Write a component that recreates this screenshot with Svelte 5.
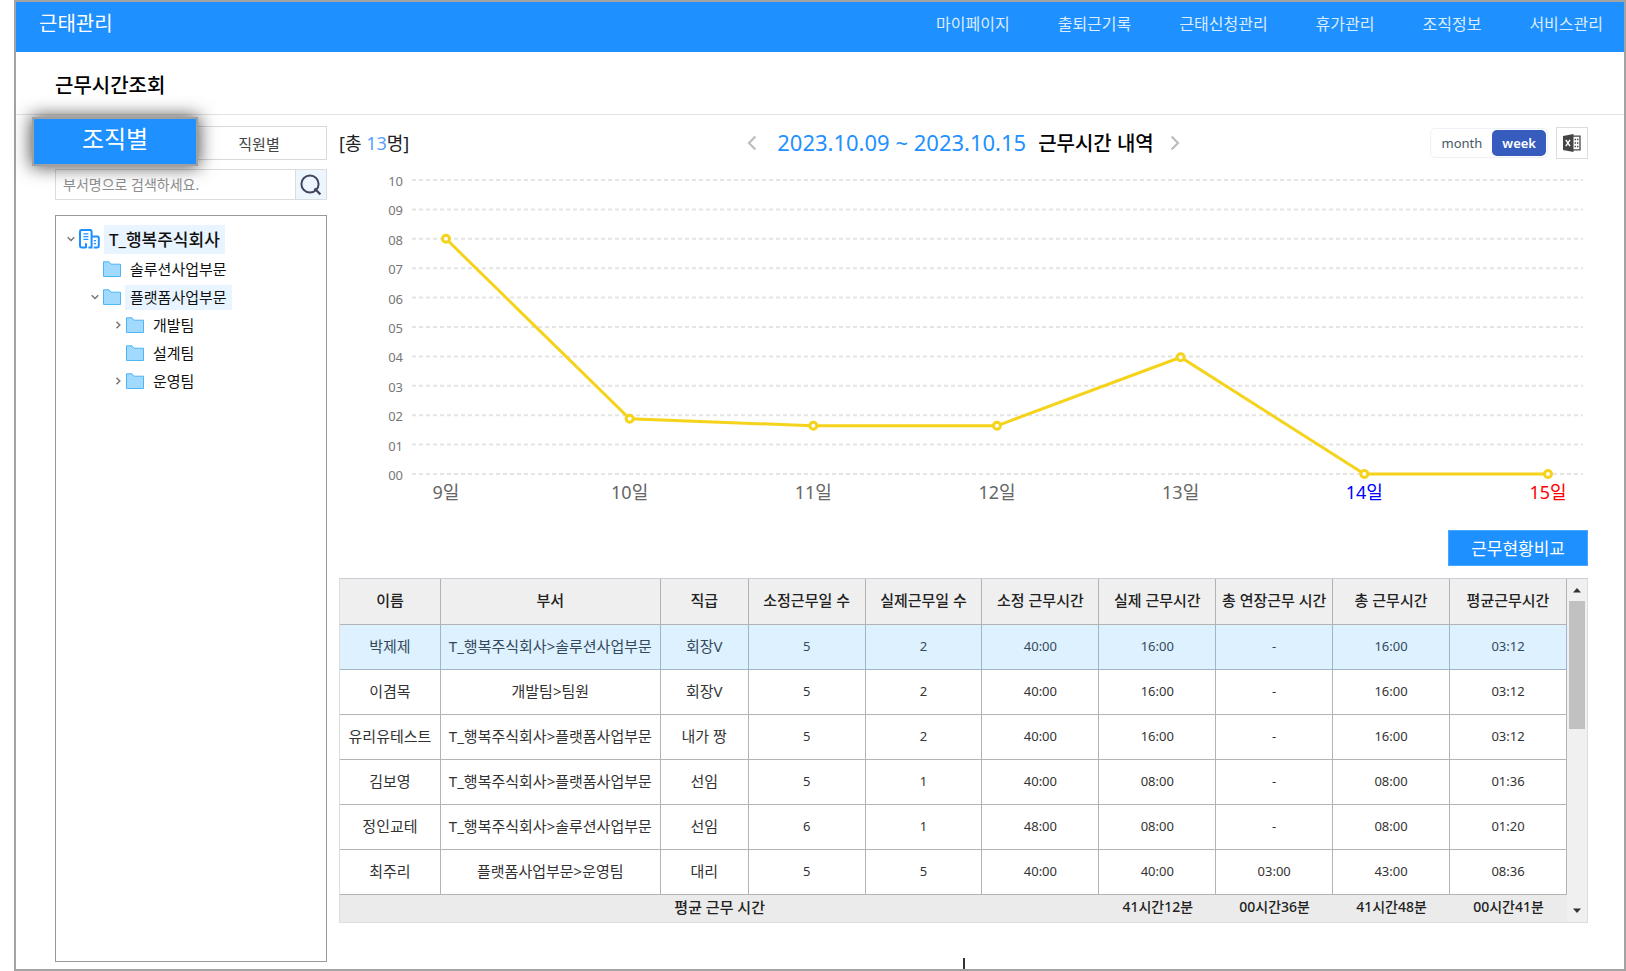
<!-- WorkTimeView.svelte -->
<script>
	const menus = ['마이페이지', '출퇴근기록', '근태신청관리', '휴가관리', '조직정보', '서비스관리'];

	const tree = [
		{ name: 'T_행복주식회사', level: 1, open: true, root: true, active: true },
		{ name: '솔루션사업부문', level: 2 },
		{ name: '플랫폼사업부문', level: 2, open: true, active: true },
		{ name: '개발팀', level: 3, open: false },
		{ name: '설계팀', level: 3 },
		{ name: '운영팀', level: 3, open: false }
	];

	const columns = [
		{ label: '이름', width: 101 },
		{ label: '부서', width: 220 },
		{ label: '직급', width: 88 },
		{ label: '소정근무일 수', width: 117 },
		{ label: '실제근무일 수', width: 117 },
		{ label: '소정 근무시간', width: 117 },
		{ label: '실제 근무시간', width: 117 },
		{ label: '총 연장근무 시간', width: 117 },
		{ label: '총 근무시간', width: 117 },
		{ label: '평균근무시간', width: 117 }
	];
	const totalWidth = columns.reduce((sum, col) => sum + col.width, 0);

	const rows = [
		['박제제', 'T_행복주식회사>솔루션사업부문', '회장V', '5', '2', '40:00', '16:00', '-', '16:00', '03:12'],
		['이겸목', '개발팀>팀원', '회장V', '5', '2', '40:00', '16:00', '-', '16:00', '03:12'],
		['유리유테스트', 'T_행복주식회사>플랫폼사업부문', '내가 짱', '5', '2', '40:00', '16:00', '-', '16:00', '03:12'],
		['김보영', 'T_행복주식회사>플랫폼사업부문', '선임', '5', '1', '40:00', '08:00', '-', '08:00', '01:36'],
		['정인교테', 'T_행복주식회사>솔루션사업부문', '선임', '6', '1', '48:00', '08:00', '-', '08:00', '01:20'],
		['최주리', '플랫폼사업부문>운영팀', '대리', '5', '5', '40:00', '40:00', '03:00', '43:00', '08:36']
	];
	const averages = ['41시간12분', '00시간36분', '41시간48분', '00시간41분'];

	// 일자별 평균 근무시간
	const days = [
		{ label: '9일', value: 8 },
		{ label: '10일', value: 1.88 },
		{ label: '11일', value: 1.64 },
		{ label: '12일', value: 1.64 },
		{ label: '13일', value: 3.97 },
		{ label: '14일', value: 0, type: 'sat' },
		{ label: '15일', value: 0, type: 'sun' }
	];
	const ticks = Array.from({ length: 11 }, (_, i) => i);

	const chartHeight = 345;
	const plotTop = 15;
	const plotBottom = 309;
	const plotLeft = 73;
	const firstDay = 107;

	let chartWidth = 1249;
	let view = 'week';
	let keyword = '';
	let selected = 0;

	$: plotRight = chartWidth - 5;
	$: step = (chartWidth - firstDay - 40) / (days.length - 1);
	$: points = days.map((day, i) => ({
		...day,
		x: firstDay + step * i,
		y: yOf(day.value)
	}));
	$: line = points.map((p) => `${p.x},${p.y}`).join(' ');

	function yOf(value) {
		return plotBottom - ((plotBottom - plotTop) / 10) * value;
	}
</script>

<div class="page">
	<header class="top-bar">
		<a class="brand" href="#home">근태관리</a>
		<nav class="menu">
			{#each menus as menu}
				<a href="#menu">{menu}</a>
			{/each}
		</nav>
	</header>

	<div class="title-bar">
		<h1>근무시간조회</h1>
	</div>

	<div class="body">
		<!-- 조직 영역 -->
		<aside class="sidebar">
			<div class="tabs">
				<button class="tab tab-active" type="button">조직별</button>
				<button class="tab" type="button">직원별</button>
			</div>

			<div class="search">
				<input type="text" bind:value={keyword} placeholder="부서명으로 검색하세요." aria-label="부서명 검색" />
				<button type="button" aria-label="검색">
					<svg width="22" height="22" viewBox="0 0 22 22" fill="none" stroke="#45455f" stroke-width="2">
						<circle cx="10" cy="10" r="8.6" />
						<path d="M14.5 14.5 20.4 20.4" stroke-width="2.2" />
					</svg>
				</button>
			</div>

			<ul class="tree">
				{#each tree as node}
					<li class="node level-{node.level}" class:root={node.root}>
						<span class="twisty">
							{#if node.open === true}
								<svg width="8" height="8" viewBox="0 0 8 8" fill="none" stroke="#777" stroke-width="1.5">
									<path d="M.7 2.2 4 5.5 7.3 2.2" />
								</svg>
							{:else if node.open === false}
								<svg width="8" height="8" viewBox="0 0 8 8" fill="none" stroke="#777" stroke-width="1.5">
									<path d="M2.5.7 5.8 4 2.5 7.3" />
								</svg>
							{/if}
						</span>
						{#if node.root}
							<svg class="icon" width="21" height="20" viewBox="0 0 21 20" fill="none" stroke="#1e90ff" stroke-width="2">
								<path d="M7 18.5H2.4Q1 18.5 1 17.1V2.4Q1 1 2.4 1H11.2Q12.6 1 12.6 2.4V18.5H9.4" />
								<path d="M12.6 7.6H18.4Q19.8 7.6 19.8 9V17.1Q19.8 18.5 18.4 18.5H14.8" />
								<path d="M7 19V14.2" />
								<path d="M4.4 4.8H9.4M4.4 7.6H9.4M4.4 10.4H9.4" stroke-width="1.3" />
								<path d="M14.8 11.6H17M14.8 14.6H17" stroke-width="1.3" />
							</svg>
						{:else}
							<svg class="icon" width="18" height="16" viewBox="0 0 18 16" fill="#a1d9ff" stroke="#4fb6f5">
								<path d="M.5 15.5V.8H6L8 3.2H17.5V15.5Z" />
							</svg>
						{/if}
						<a class="node-name" class:active={node.active} href="#dept">{node.name}</a>
					</li>
				{/each}
			</ul>
		</aside>

		<!-- 근무시간 내역 -->
		<main class="content">
			<div class="toolbar">
				<p class="count">[총 <em>13</em>명]</p>
				<div class="period">
					<button type="button" class="arrow" aria-label="이전">
						<svg width="10" height="16" viewBox="0 0 10 16" fill="none" stroke="#bdbdbd" stroke-width="2.2">
							<path d="M8.4 1.5 2 8 8.4 14.5" />
						</svg>
					</button>
					<h2><span>2023.10.09 ~ 2023.10.15</span>근무시간 내역</h2>
					<button type="button" class="arrow" aria-label="다음">
						<svg width="10" height="16" viewBox="0 0 10 16" fill="none" stroke="#bdbdbd" stroke-width="2.2">
							<path d="M1.6 1.5 8 8 1.6 14.5" />
						</svg>
					</button>
				</div>
				<div class="actions">
					<div class="switch">
						<button type="button" class:on={view === 'month'} on:click={() => (view = 'month')}>month</button>
						<button type="button" class:on={view === 'week'} on:click={() => (view = 'week')}>week</button>
					</div>
					<button type="button" class="excel" aria-label="엑셀 다운로드">
						<svg width="18" height="18" viewBox="0 0 18 18">
							<path d="M9 2.2H17V15.8H9" fill="#fff" stroke="#444" stroke-width="1.3" />
							<path d="M0 2 10.5 0V18L0 16Z" fill="#444" />
							<path d="M2.8 5.8 7 12.2M7 5.8 2.8 12.2" stroke="#fff" stroke-width="1.4" />
							<path d="M11.6 5.6H13M14 5.6H15.4M11.6 9H13M14 9H15.4M11.6 12.4H13M14 12.4H15.4" stroke="#444" stroke-width="1.5" />
						</svg>
					</button>
				</div>
			</div>

			<div class="chart" bind:clientWidth={chartWidth}>
				<svg width={chartWidth} height={chartHeight} role="img" aria-label="근무시간 그래프">
					{#each ticks as tick}
						<line class="grid" x1={plotLeft} x2={plotRight} y1={yOf(tick)} y2={yOf(tick)} />
						<text class="tick" x="64" y={yOf(tick) + 6}>{String(tick).padStart(2, '0')}</text>
					{/each}
					<polyline class="line" points={line} />
					{#each points as point}
						<circle class="dot" cx={point.x} cy={point.y} r="3.5" />
						<text class="day {point.type || ''}" x={point.x} y="334">{point.label}</text>
					{/each}
				</svg>
			</div>

			<button type="button" class="compare">근무현황비교</button>

			<div class="table-box">
				<table>
					<colgroup>
						{#each columns as col}
							<col style="width: {(col.width / totalWidth) * 100}%" />
						{/each}
					</colgroup>
					<thead>
						<tr>
							{#each columns as col}
								<th scope="col">{col.label}</th>
							{/each}
						</tr>
					</thead>
					<tbody>
						{#each rows as row, i}
							<tr class:selected={selected === i} on:click={() => (selected = i)}>
								{#each row as cell, j}
									<td class:num={j > 2}>{cell}</td>
								{/each}
							</tr>
						{/each}
					</tbody>
					<tfoot>
						<tr>
							<th colspan="6" scope="row">평균 근무 시간</th>
							{#each averages as average}
								<td>{average}</td>
							{/each}
						</tr>
					</tfoot>
				</table>
				<div class="scrollbar" aria-hidden="true">
					<svg width="10" height="6" viewBox="0 0 10 6"><path d="M1 5.5 5 1 9 5.5Z" fill="#333" /></svg>
					<div class="thumb"></div>
					<svg width="10" height="6" viewBox="0 0 10 6"><path d="M1 .5 5 5 9 .5Z" fill="#333" /></svg>
				</div>
			</div>

			<span class="caret"></span>
		</main>
	</div>
</div>

<style>
	:global(body) {
		background: #fff;
		font-family: 'Noto Sans', 'Noto Sans CJK KR', sans-serif;
		color: #222;
	}

	button,
	input {
		font-family: inherit;
		box-sizing: border-box;
		margin: 0;
		padding: 0;
	}

	button {
		cursor: pointer;
	}

	a {
		color: inherit;
		text-decoration: none;
	}

	.page {
		display: flex;
		flex-direction: column;
		min-height: 100vh;
		box-sizing: border-box;
		margin-left: 14px;
		border: 2px solid #a3a3a3;
	}

	/* 상단 메뉴 */
	.top-bar {
		display: flex;
		justify-content: space-between;
		height: 50px;
		padding: 0 21px 0 23px;
		background: #1e90ff;
		color: #fff;
		line-height: 44px;
	}

	.brand {
		font-size: 20px;
	}

	.menu {
		display: flex;
		gap: 48px;
		font-size: 16px;
		color: #dcedff;
	}

	.title-bar {
		padding: 6px 0 0 39px;
		border-bottom: 1px solid #e3e3e3;
	}

	h1 {
		margin: 0;
		font-size: 20px;
		font-weight: 500;
		line-height: 56px;
		color: #000;
	}

	.body {
		display: flex;
		flex: 1;
		gap: 12px;
		padding: 11px 36px 0 39px;
	}

	/* 조직 영역 */
	.sidebar {
		display: flex;
		flex-direction: column;
		flex: none;
		width: 272px;
		margin-bottom: 7px;
	}

	.tabs {
		position: relative;
		display: flex;
		justify-content: flex-end;
		height: 34px;
		margin-bottom: 9px;
	}

	.tab {
		width: 50%;
		border: 1px solid #d9d9d9;
		background: #fff;
		font-size: 15px;
		color: #444;
	}

	.tab-active {
		position: absolute;
		top: -9px;
		left: -23px;
		width: 166px;
		height: 49px;
		padding-bottom: 8px;
		border: 2px solid #a0a0a0;
		background: #1e90ff;
		box-shadow: 0 0 18px 1px rgba(0, 0, 0, 0.7);
		color: #fff;
		font-size: 24px;
	}

	.search {
		display: flex;
		height: 31px;
		margin-bottom: 15px;
		border: 1px solid #dcdcdc;
		box-sizing: border-box;
	}

	.search input {
		flex: 1;
		min-width: 0;
		padding: 0 7px;
		border: 0;
		outline: 0;
		background: transparent;
		font-size: 14px;
	}

	.search input::placeholder {
		color: #8e8e8e;
	}

	.search button {
		display: flex;
		align-items: center;
		justify-content: center;
		width: 31px;
		border: 0;
		border-left: 1px solid #dcdcdc;
		background: #edf6ff;
	}

	.tree {
		flex: 1;
		margin: 0;
		padding: 8px 11px;
		border: 1px solid #999;
		list-style: none;
	}

	.node {
		display: flex;
		align-items: center;
		gap: 4px;
		height: 28px;
		font-size: 15px;
		color: #111;
	}

	.node.root {
		height: 30px;
		margin-bottom: 1px;
		font-size: 17px;
		font-weight: 500;
	}

	.level-2 {
		padding-left: 24px;
	}

	.level-3 {
		padding-left: 47px;
	}

	.twisty {
		display: flex;
		width: 8px;
	}

	.icon {
		flex: none;
	}

	.node-name {
		padding: 0 5px;
		line-height: 25px;
	}

	.root .node-name {
		line-height: 29px;
	}

	.node-name.active {
		background: #e8f4ff;
	}

	/* 조회 조건 */
	.content {
		display: flex;
		flex-direction: column;
		flex: 1;
		min-width: 0;
	}

	.toolbar {
		display: grid;
		grid-template-columns: 1fr auto 1fr;
		align-items: center;
		height: 34px;
		margin-bottom: 5px;
	}

	.count {
		margin: 0;
		font-size: 18px;
		line-height: 24px;
	}

	.count em {
		font-style: normal;
		color: #5c9dff;
	}

	.period {
		display: flex;
		align-items: center;
		gap: 16px;
	}

	.arrow {
		display: flex;
		justify-content: center;
		width: 10px;
		border: 0;
		background: none;
	}

	h2 {
		margin: 0 0 0 4px;
		font-size: 20px;
		font-weight: 500;
		line-height: 30px;
		color: #000;
	}

	h2 span {
		margin-right: 12px;
		font-size: 22px;
		font-weight: 400;
		color: #1e90ff;
	}

	.actions {
		display: flex;
		align-items: center;
		justify-content: flex-end;
		gap: 8px;
	}

	.switch {
		display: flex;
		padding: 1px;
		border: 1px solid #edf1f8;
		border-radius: 5px;
	}

	.switch button {
		height: 26px;
		padding: 0 10px;
		border: 0;
		border-radius: 5px;
		background: none;
		font-size: 13px;
		color: #465866;
	}

	.switch button.on {
		background: #365cbd;
		color: #fff;
		font-weight: 600;
	}

	.excel {
		display: flex;
		align-items: center;
		justify-content: center;
		width: 32px;
		height: 32px;
		border: 1px solid #dcdcdc;
		background: #fff;
	}

	/* 그래프 */
	.chart {
		overflow: hidden;
	}

	.chart svg {
		display: block;
	}

	.grid {
		stroke: #e4e4e4;
		stroke-width: 2;
		stroke-dasharray: 4 3;
	}

	.tick {
		font-size: 13px;
		text-anchor: end;
		fill: #777;
	}

	.line {
		fill: none;
		stroke: #f5d31b;
		stroke-width: 3;
	}

	.dot {
		fill: #fff;
		stroke: #f5d31b;
		stroke-width: 3;
	}

	.day {
		font-size: 18px;
		text-anchor: middle;
		fill: #666;
	}

	.day.sat {
		fill: #00f;
	}

	.day.sun {
		fill: #f00;
	}

	.compare {
		align-self: flex-end;
		height: 36px;
		margin: 20px 0 12px;
		padding: 0 22px 2px;
		border: 1px solid #4aa6ff;
		background: #1e90ff;
		color: #fff;
		font-size: 17px;
	}

	/* 근무시간 표 */
	.table-box {
		display: flex;
		border: 1px solid #ddd;
		border-top-color: #d3c9d6;
	}

	table {
		flex: 1;
		width: 0;
		table-layout: fixed;
		border-spacing: 0;
		text-align: center;
	}

	th,
	td {
		box-sizing: border-box;
		padding: 0 0 3px;
		border-right: 1px solid #b3b3b3;
		border-bottom: 1px solid #b3b3b3;
		font-size: 15px;
		line-height: 20px;
		white-space: nowrap;
	}

	thead th {
		height: 46px;
		background: #efefef;
		font-weight: 500;
	}

	tbody td {
		height: 45px;
		color: #333;
	}

	tbody .num {
		font-size: 13px;
	}

	.selected td {
		border-color: #9fb4c6;
		background: #def1ff;
		color: #34495c;
	}

	tfoot th,
	tfoot td {
		height: 27px;
		border: 0;
		background: #ebebeb;
		font-weight: 500;
	}

	tfoot td {
		font-size: 14px;
	}

	.scrollbar {
		display: flex;
		flex-direction: column;
		align-items: center;
		width: 20px;
		padding: 8px 0;
		box-sizing: border-box;
		background: #f0f0f0;
	}

	.thumb {
		width: 16px;
		height: 128px;
		margin: 8px 0 auto;
		background: #c1c1c1;
	}

	.caret {
		align-self: center;
		width: 2px;
		height: 11px;
		margin-top: auto;
		background: #333;
	}
</style>
